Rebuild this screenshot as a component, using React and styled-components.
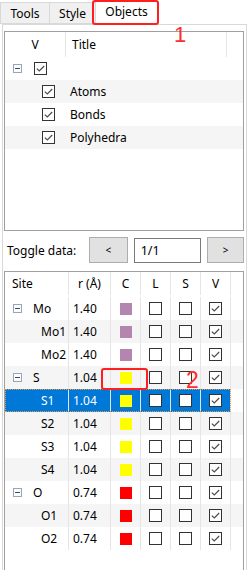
import styled, { createGlobalStyle } from 'styled-components';

const Global = createGlobalStyle`
  body {
    margin: 0;
    background: #fff;
    font-family: "Noto Sans", "Liberation Sans", sans-serif;
    font-size: 12px;
    color: #000;
  }
`;

const Screen = styled.div`
  position: relative;
  width: 249px;
  height: 570px;
  overflow: hidden;
`;

const TabBar = styled.div`
  display: flex;
  align-items: flex-end;
  height: 24px;
`;

const Tab = styled.div`
  position: relative;
  z-index: ${p => p.active ? 2 : 1};
  box-sizing: border-box;
  width: ${p => p.w}px;
  height: ${p => p.active ? 25 : 22}px;
  margin-left: ${p => p.first ? 0 : -1}px;
  margin-bottom: ${p => p.active ? -1 : 0}px;
  border: 1px solid #d9d9d9;
  border-bottom: ${p => p.active ? 'none' : '1px solid #d9d9d9'};
  background: ${p => p.active ? '#fff' : '#f0f0f0'};
  display: flex;
  align-items: center;
  justify-content: center;
  padding-bottom: ${p => p.active ? 3 : 0}px;
`;

const Pane = styled.div`
  position: relative;
  box-sizing: border-box;
  width: 245px;
  height: 560px;
  margin-left: 2px;
  border: 1px solid #d9d9d9;
  padding: 6px 2px 0 1px;
  background: #fff;
`;

const Box = styled.div`
  box-sizing: border-box;
  width: 240px;
  height: ${p => p.h}px;
  border: 1px solid #a0a0a0;
  background: #fff;
  margin-top: ${p => p.mt || 0}px;
`;

const HeadRow = styled.div`
  display: flex;
  height: 25px;
`;

const HeadCell = styled.div`
  box-sizing: border-box;
  width: ${p => p.w ? `${p.w}px` : 'auto'};
  flex: ${p => p.w ? 'none' : 1};
  border-right: ${p => p.sep ? '1px solid #e5e5e5' : 'none'};
  display: flex;
  align-items: center;
  justify-content: ${p => p.left ? 'flex-start' : 'center'};
  padding-left: ${p => p.pl || 0}px;
`;

const TreeRow = styled.div`
  display: flex;
  align-items: center;
  height: 23px;
  background: ${p => p.alt ? '#f5f5f5' : '#fff'};
`;

const TreeCell = styled.div`
  box-sizing: border-box;
  width: ${p => p.w}px;
  display: flex;
  align-items: center;
  padding-left: ${p => p.pl || 0}px;
`;

const ExpanderSlot = styled.div`
  width: ${p => p.w}px;
  flex: none;
  display: flex;
  align-items: center;
`;

const Expander = styled.div`
  box-sizing: border-box;
  width: 9px;
  height: 9px;
  border: 1px solid #9aa6b8;
  background: #fdfdfd;
  display: flex;
  align-items: center;
  justify-content: center;
  &::after {
    content: '';
    width: 5px;
    height: 1px;
    background: #2e4a72;
  }
`;

const CheckFrame = styled.div`
  box-sizing: border-box;
  width: 13px;
  height: 13px;
  flex: none;
  border: 1px solid #333;
  background: #fff;
  margin-left: ${p => p.ml || 0}px;
  display: flex;
  align-items: center;
  justify-content: center;
`;

const ToggleRow = styled.div`
  display: flex;
  align-items: center;
  height: 26px;
  margin-top: 6px;
  padding-left: 3px;
`;

const ToggleLabel = styled.span`
  width: 80px;
  flex: none;
`;

const NavButton = styled.div`
  box-sizing: border-box;
  width: ${p => p.w}px;
  height: 26px;
  margin-left: ${p => p.ml}px;
  background: #e1e1e1;
  border: 1px solid #adadad;
  display: flex;
  align-items: center;
  justify-content: center;
  font-size: 10px;
`;

const PageInput = styled.div`
  box-sizing: border-box;
  width: 68px;
  height: 25px;
  margin-left: 6px;
  margin-top: 1px;
  border: 1px solid #7a7a7a;
  background: #fff;
  padding-left: 6px;
  display: flex;
  align-items: center;
  font-size: 12.5px;
`;

const GridRow = styled.div`
  display: flex;
  height: 23px;
  background: ${p => p.alt ? '#f5f5f5' : 'transparent'};
`;

const RowMain = styled.div`
  display: flex;
  box-sizing: border-box;
  background: ${p => p.selected ? '#0078d7' : 'transparent'};
  color: ${p => p.selected ? '#fff' : '#000'};
  outline: ${p => p.selected ? '1px dotted #e89a3c' : 'none'};
  outline-offset: -1px;
`;

const GridCell = styled.div`
  box-sizing: border-box;
  width: ${p => p.w}px;
  height: 23px;
  border-right: 1px solid #e5e5e5;
  display: flex;
  align-items: center;
  justify-content: ${p => p.center ? 'center' : 'flex-start'};
  padding-left: ${p => p.pl || 0}px;
`;

const Filler = styled.div`
  flex: 1;
`;

const Swatch = styled.div`
  width: 12px;
  height: 12px;
  background: ${p => p.color};
`;

const Highlight = styled.div`
  position: absolute;
  left: ${p => p.x}px;
  top: ${p => p.y}px;
  width: ${p => p.w}px;
  height: ${p => p.h}px;
  box-sizing: border-box;
  border: 2px solid #ff1f1f;
  border-radius: 3px;
  z-index: 5;
`;

const Marker = styled.div`
  position: absolute;
  left: ${p => p.x}px;
  top: ${p => p.y}px;
  font-family: "Liberation Sans", Arial, sans-serif;
  font-size: ${p => p.size}px;
  line-height: ${p => p.size}px;
  color: #ff2d2d;
  z-index: 5;
`;

function CheckBox({ checked, ml }) {
  return (
    <CheckFrame ml={ml}>
      {checked && (
        <svg width="11" height="11" viewBox="0 0 11 11">
          <polyline points="1.8,5.6 4.3,8 9.2,3" fill="none" stroke="#4d4d4d" strokeWidth="1.2" />
        </svg>
      )}
    </CheckFrame>
  );
}

const objects = [
  { title: '', depth: 0, group: true },
  { title: 'Atoms', depth: 1 },
  { title: 'Bonds', depth: 1 },
  { title: 'Polyhedra', depth: 1 },
];

const sites = [
  { name: 'Mo', r: '1.40', color: '#b486af', group: true },
  { name: 'Mo1', r: '1.40', color: '#b486af' },
  { name: 'Mo2', r: '1.40', color: '#b486af' },
  { name: 'S', r: '1.04', color: '#ffff00', group: true },
  { name: 'S1', r: '1.04', color: '#ffff00', selected: true },
  { name: 'S2', r: '1.04', color: '#ffff00' },
  { name: 'S3', r: '1.04', color: '#ffff00' },
  { name: 'S4', r: '1.04', color: '#ffff00' },
  { name: 'O', r: '0.74', color: '#ff0000', group: true },
  { name: 'O1', r: '0.74', color: '#ff0000' },
  { name: 'O2', r: '0.74', color: '#ff0000' },
];

export default function App() {
  return (
    <Screen>
      <Global />
      <TabBar>
        <Tab first w={50}>Tools</Tab>
        <Tab w={47}>Style</Tab>
        <Tab active w={63}>Objects</Tab>
      </TabBar>
      <Pane>
        <Box h={200}>
          <HeadRow>
            <HeadCell w={61} sep>V</HeadCell>
            <HeadCell w={161} sep left pl={6}>Title</HeadCell>
            <HeadCell />
          </HeadRow>
          {objects.map((o, i) => (
            <TreeRow key={i} alt={i % 2 === 1}>
              <TreeCell w={61} pl={8}>
                <ExpanderSlot w={21}>{o.group && <Expander />}</ExpanderSlot>
                <CheckBox checked ml={o.depth * 8} />
              </TreeCell>
              <TreeCell w={161} pl={4}>{o.title}</TreeCell>
            </TreeRow>
          ))}
        </Box>

        <ToggleRow>
          <ToggleLabel>Toggle data:</ToggleLabel>
          <NavButton w={39} ml={2}>&lt;</NavButton>
          <PageInput>1/1</PageInput>
          <NavButton w={37} ml={6}>&gt;</NavButton>
        </ToggleRow>

        <Box h={320} mt={8}>
          <HeadRow>
            <GridCell w={64} pl={7}>Site</GridCell>
            <GridCell w={42} center>r (Å)</GridCell>
            <GridCell w={30} center>C</GridCell>
            <GridCell w={30} center>L</GridCell>
            <GridCell w={30} center>S</GridCell>
            <GridCell w={30} center>V</GridCell>
          </HeadRow>
          {sites.map((s, i) => (
            <GridRow key={s.name} alt={i % 2 === 1}>
              <RowMain selected={s.selected}>
                <GridCell w={64} pl={8}>
                  <ExpanderSlot w={20}>{s.group && <Expander />}</ExpanderSlot>
                  <span style={{ marginLeft: s.group ? 0 : 8 }}>{s.name}</span>
                </GridCell>
                <GridCell w={42} pl={4}>{s.r}</GridCell>
                <GridCell w={30} center><Swatch color={s.color} /></GridCell>
                <GridCell w={30} center><CheckBox /></GridCell>
                <GridCell w={30} center><CheckBox /></GridCell>
                <GridCell w={30} center><CheckBox checked /></GridCell>
              </RowMain>
              <Filler />
            </GridRow>
          ))}
        </Box>
      </Pane>

      <Highlight x={92} y={0} w={67} h={25} />
      <Marker x={174} y={24} size={22}>1</Marker>
      <Highlight x={101} y={368} w={47} h={22} />
      <Marker x={186} y={369} size={23}>2</Marker>
    </Screen>
  );
}
